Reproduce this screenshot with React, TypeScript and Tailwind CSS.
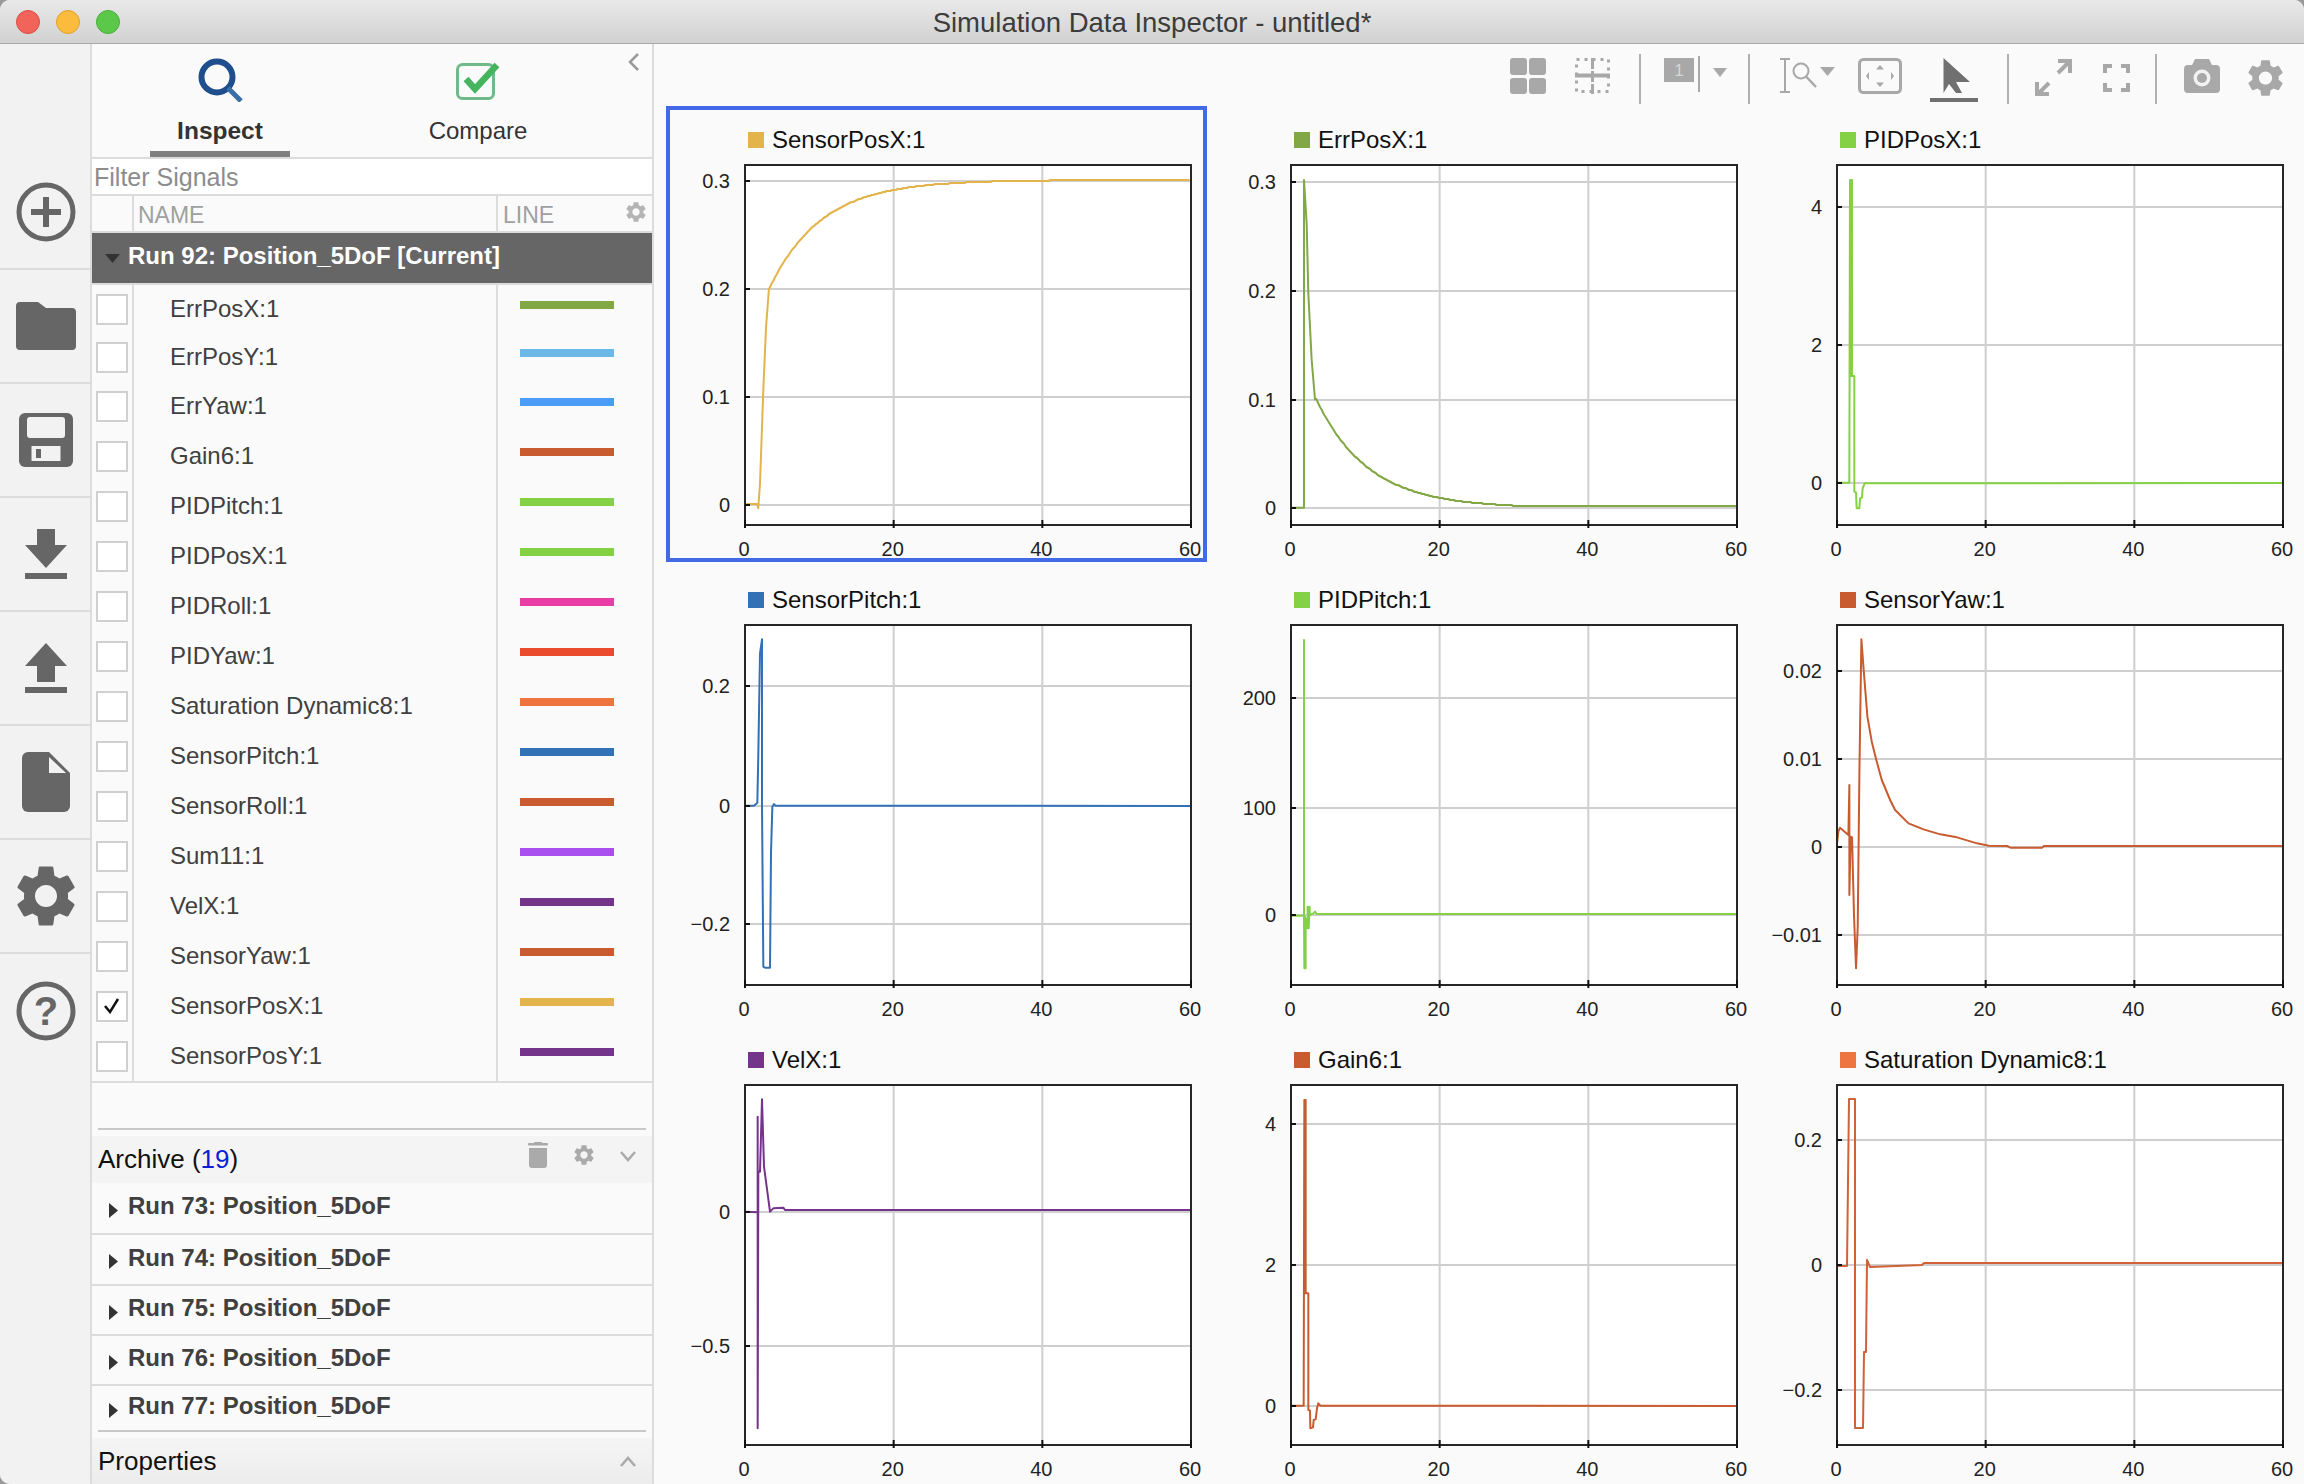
import React from 'react';

type Pt = [number, number];

// points below were read off the screenshot crops, so map crop coords to plot px
const toPlot = (pts: Pt[], sx: number, sy: number, ox: number, oy: number): Pt[] =>
  pts.map(([x, y]) => [(x - ox) / sx, (y - oy) / sy]);

// first order settling tail, rounded to whole pixels to keep the stepped look
const tail = (from: number, yOf: (v: number) => number): Pt[] => {
  const pts: Pt[] = [];
  for (let t = from; t <= 60; t += 0.25) {
    pts.push([(t / 60) * 446, Math.round(yOf(0.1 * Math.exp(-(t - from) / 7)))]);
  }
  return pts;
};

const plots: { name: string; color: string; line?: string; yTicks: [string, number][]; points: Pt[] }[] = [
  {
    name: 'SensorPosX:1',
    color: '#e3b44c',
    yTicks: [['0.3', 16], ['0.2', 124], ['0.1', 232], ['0', 340]],
    points: [
      ...toPlot(
        [[238, 1212], [272, 1212], [275, 1225], [280, 1150], [290, 850], [297, 680], [305, 567]],
        2.8, 3, 238, 195,
      ),
      ...tail(3.3, (v) => 15 + v * 1080),
    ],
  },
  {
    name: 'ErrPosX:1',
    color: '#82a846',
    yTicks: [['0.3', 17], ['0.2', 126], ['0.1', 235], ['0', 343]],
    points: [
      ...toPlot(
        [[18, 1043], [57, 1043], [57, 60], [65, 190], [70, 400], [80, 600], [90, 718]],
        3, 3, 18, 15,
      ),
      ...tail(3.4, (v) => Math.min(341, 343 - v * 1087)),
    ],
  },
  {
    name: 'PIDPosX:1',
    color: '#84d146',
    yTicks: [['4', 42], ['2', 180], ['0', 318]],
    points: [
      ...toPlot(
        [[21, 968], [58, 968], [60, 60], [62, 648], [63, 60], [66, 60], [66, 648], [73, 648], [73, 995], [78, 997], [80, 1045], [88, 1045], [90, 1015], [96, 1012], [98, 985], [104, 970]],
        3, 3, 21, 15,
      ),
      [446, 318],
    ],
  },
  {
    name: 'SensorPitch:1',
    color: '#3371b7',
    yTicks: [['0.2', 61], ['0', 181], ['−0.2', 299]],
    points: [
      ...toPlot(
        [[15, 557], [42, 557], [52, 548], [55, 400], [60, 100], [66, 58], [66, 555], [70, 1040], [75, 1043], [90, 1043], [93, 700], [97, 560], [102, 552], [106, 557]],
        3, 3, 15, 15,
      ),
      [446, 181],
    ],
  },
  {
    name: 'PIDPitch:1',
    color: '#84d146',
    yTicks: [['200', 73], ['100', 183], ['0', 290]],
    points: [
      ...toPlot(
        [[18, 887], [57, 887], [57, 60], [57, 890], [58, 1045], [60, 890], [61, 1045], [62, 1045], [62, 895], [68, 925], [68, 860], [71, 925], [74, 860], [74, 885], [85, 880], [90, 875], [95, 882]],
        3, 3, 18, 15,
      ),
      [446, 289],
    ],
  },
  {
    name: 'SensorYaw:1',
    color: '#c85c30',
    yTicks: [['0.02', 46], ['0.01', 134], ['0', 222], ['−0.01', 310]],
    points: toPlot(
      [[171, 730], [175, 695], [180, 683], [205, 705], [208, 555], [208, 885], [212, 710], [216, 712], [222, 950], [228, 1105], [233, 980], [238, 520], [244, 118], [250, 200], [262, 350], [275, 425], [290, 485], [305, 540], [330, 600], [345, 630], [385, 670], [430, 688], [480, 703], [530, 712], [590, 730], [625, 737], [680, 738], [690, 743], [785, 743], [790, 738], [1505, 738]],
      2.992, 3, 171, 75,
    ),
  },
  {
    name: 'VelX:1',
    color: '#74348a',
    yTicks: [['0', 127], ['−0.5', 261]],
    points: [
      ...toPlot(
        [[15, 395], [53, 397], [53, 110], [53, 1045], [55, 275], [60, 275], [66, 58], [72, 260], [90, 395], [100, 385], [130, 383], [135, 390]],
        3, 3, 15, 15,
      ),
      [446, 125],
    ],
  },
  {
    name: 'Gain6:1',
    color: '#c85c30',
    yTicks: [['4', 39], ['2', 180], ['0', 321]],
    points: [
      ...toPlot(
        [[18, 977], [56, 977], [58, 60], [60, 640], [61, 60], [62, 60], [62, 640], [70, 640], [70, 990], [75, 992], [76, 1045], [84, 1042], [86, 1020], [92, 1018], [96, 985], [100, 970], [106, 977]],
        3, 3, 18, 15,
      ),
      [446, 321],
    ],
  },
  {
    name: 'Saturation Dynamic8:1',
    color: '#ee7440',
    line: '#cf6236',
    yTicks: [['0.2', 55], ['0', 180], ['−0.2', 305]],
    points: [[0, 181], [10, 181], [12, 14], [18, 14], [18, 343], [26, 343], [27, 267], [29, 267], [30, 175], [33, 182], [85, 180], [87, 178], [446, 178]],
  },
];

const signals = [
  { name: 'ErrPosX:1', color: 'bg-[#82a846]', height: 'h-[48px]' },
  { name: 'ErrPosY:1', color: 'bg-[#6cb8e8]', height: 'h-[48px]' },
  { name: 'ErrYaw:1', color: 'bg-[#4a9cf5]', height: 'h-[50px]' },
  { name: 'Gain6:1', color: 'bg-[#c85c30]', height: 'h-[50px]' },
  { name: 'PIDPitch:1', color: 'bg-[#84d146]', height: 'h-[50px]' },
  { name: 'PIDPosX:1', color: 'bg-[#84d146]', height: 'h-[50px]' },
  { name: 'PIDRoll:1', color: 'bg-[#e93ca5]', height: 'h-[50px]' },
  { name: 'PIDYaw:1', color: 'bg-[#e94b2c]', height: 'h-[50px]' },
  { name: 'Saturation Dynamic8:1', color: 'bg-[#ee7440]', height: 'h-[50px]' },
  { name: 'SensorPitch:1', color: 'bg-[#3371b7]', height: 'h-[50px]' },
  { name: 'SensorRoll:1', color: 'bg-[#c85c30]', height: 'h-[50px]' },
  { name: 'Sum11:1', color: 'bg-[#a94ff0]', height: 'h-[50px]' },
  { name: 'VelX:1', color: 'bg-[#74348a]', height: 'h-[50px]' },
  { name: 'SensorYaw:1', color: 'bg-[#c85c30]', height: 'h-[50px]' },
  { name: 'SensorPosX:1', color: 'bg-[#e3b44c]', height: 'h-[50px]', checked: true },
  { name: 'SensorPosY:1', color: 'bg-[#74348a]', height: 'h-[50px]' },
];

const archiveRuns = [
  { name: 'Run 73: Position_5DoF', height: 'h-[52px]' },
  { name: 'Run 74: Position_5DoF', height: 'h-[51px]' },
  { name: 'Run 75: Position_5DoF', height: 'h-[50px]' },
  { name: 'Run 76: Position_5DoF', height: 'h-[50px]' },
  { name: 'Run 77: Position_5DoF', height: 'h-[44px]', last: true },
];

const GEAR =
  'M19.14 12.94c.04-.3.06-.61.06-.94 0-.32-.02-.64-.07-.94l2.03-1.58c.18-.14.23-.41.12-.61l-1.92-3.32c-.12-.22-.37-.29-.59-.22l-2.39.96c-.5-.38-1.03-.7-1.62-.94l-.36-2.54c-.04-.24-.24-.41-.48-.41h-3.84c-.24 0-.43.17-.47.41l-.36 2.54c-.59.24-1.13.57-1.62.94l-2.39-.96c-.22-.08-.47 0-.59.22L2.74 8.87c-.12.21-.08.47.12.61l2.03 1.58c-.05.3-.09.63-.09.94s.02.64.07.94l-2.03 1.58c-.18.14-.23.41-.12.61l1.92 3.32c.12.22.37.29.59.22l2.39-.96c.5.38 1.03.7 1.62.94l.36 2.54c.05.24.24.41.48.41h3.84c.24 0 .44-.17.47-.41l.36-2.54c.59-.24 1.13-.56 1.62-.94l2.39.96c.22.08.47 0 .59-.22l1.92-3.32c.12-.22.07-.47-.12-.61l-2.01-1.58zM12 15.6c-1.98 0-3.6-1.62-3.6-3.6s1.62-3.6 3.6-3.6 3.6 1.62 3.6 3.6-1.62 3.6-3.6 3.6z';

const Gear = ({ className }: { className: string }) => (
  <svg viewBox="2.6 2.2 18.8 19.6" className={className} fill="currentColor">
    <path d={GEAR} fillRule="evenodd" />
  </svg>
);

const railIcons = [
  <svg key="add" width="60" height="60" viewBox="0 0 60 60" fill="none" stroke="#666">
    <circle cx="30" cy="30" r="27" strokeWidth="5" />
    <path d="M30 15V45M15 30H45" strokeWidth="6" />
  </svg>,
  <svg key="open" width="60" height="48" viewBox="0 0 60 48" fill="#666">
    <path d="M4 0H22L30 6H56a4 4 0 0 1 4 4V44a4 4 0 0 1-4 4H4a4 4 0 0 1-4-4V4a4 4 0 0 1 4-4z" />
  </svg>,
  <svg key="save" width="54" height="54" viewBox="0 0 54 54">
    <rect width="54" height="54" rx="6" fill="#666" />
    <rect x="8" y="4" width="38" height="21" rx="3" fill="#f2f2f2" />
    <rect x="12.5" y="33" width="29" height="15" fill="#f2f2f2" />
    <rect x="17" y="36" width="5" height="9" fill="#666" />
  </svg>,
  <svg key="down" width="42" height="50" viewBox="0 0 42 50" fill="#666">
    <path d="M12 0H30V16H42L21 39L0 16H12z" />
    <rect y="44" width="42" height="6" />
  </svg>,
  <svg key="up" width="42" height="50" viewBox="0 0 42 50" fill="#666">
    <path d="M21 0L42 23H30V39H12V23H0z" />
    <rect y="44" width="42" height="6" />
  </svg>,
  <svg key="file" width="48" height="60" viewBox="0 0 48 60">
    <path d="M6 0H27L48 21V54a6 6 0 0 1-6 6H6a6 6 0 0 1-6-6V6a6 6 0 0 1 6-6z" fill="#666" />
    <path d="M27 5V21H44z" fill="#f2f2f2" />
  </svg>,
  <Gear key="gear" className="w-[60px] h-[60px] text-[#666]" />,
  <svg key="help" width="60" height="60" viewBox="0 0 60 60">
    <circle cx="30" cy="30" r="27" fill="none" stroke="#666" strokeWidth="5" />
    <text x="30" y="44" textAnchor="middle" fontSize="40" fontWeight="700" fill="#666">?</text>
  </svg>,
];

const Chart = ({ plot }: { plot: (typeof plots)[number] }) => {
  const xTicks = [0, 20, 40, 60];
  const xOf = (t: number) => (t / 60) * 446;
  return (
    <svg width="446" height="360" viewBox="0 0 446 360" className="block overflow-visible ml-[75px]">
      <rect width="446" height="360" fill="#fff" />
      {xTicks.slice(1, 3).map((t) => (
        <line key={t} x1={xOf(t)} x2={xOf(t)} y1="0" y2="360" stroke="#cfcfcf" strokeWidth="2" />
      ))}
      {plot.yTicks.map(([label, y]) => (
        <line key={label} x1="0" x2="446" y1={y} y2={y} stroke="#cfcfcf" strokeWidth="2" />
      ))}
      <polyline
        points={plot.points.map(([x, y]) => `${x},${y}`).join(' ')}
        fill="none"
        stroke={plot.line ?? plot.color}
        strokeWidth="2"
        strokeLinejoin="round"
      />
      <rect width="446" height="360" fill="none" stroke="#262626" strokeWidth="2" />
      {plot.yTicks.map(([label, y]) => (
        <g key={label}>
          <line x1="0" x2="5" y1={y} y2={y} stroke="#111" strokeWidth="2" />
          <text x="-15" y={y + 7} textAnchor="end" fontSize="20" fill="#222">{label}</text>
        </g>
      ))}
      {xTicks.map((t) => (
        <g key={t}>
          <line x1={xOf(t)} x2={xOf(t)} y1="355" y2="363" stroke="#111" strokeWidth="2" />
          <text x={xOf(t) - 1} y="391" textAnchor="middle" fontSize="20" fill="#222">{t}</text>
        </g>
      ))}
    </svg>
  );
};

const PlotCell = ({ plot, selected }: { plot: (typeof plots)[number]; selected?: boolean }) => (
  <div className={`w-[541px] h-[456px] border-4 ${selected ? 'border-[#4169e8]' : 'border-transparent'}`}>
    <div className="flex items-center h-[16px] mt-[22px] mb-[17px] ml-[78px] gap-2">
      <span className="w-4 h-4" style={{ backgroundColor: plot.color }} />
      <span className="text-[24px] text-[#111] leading-none">{plot.name}</span>
    </div>
    <Chart plot={plot} />
  </div>
);

const Sep = ({ className }: { className: string }) => <div className={`w-[2px] h-[50px] bg-[#b0b0b0] ${className}`} />;

const Toolbar = () => (
  <div className="flex justify-end items-start h-[62px] pt-[10px] pr-5 text-[#a8a8a8]">
    <svg width="36" height="50" viewBox="0 0 36 50" fill="#a8a8a8">
      <rect y="4" width="17" height="17" rx="3" />
      <rect x="19" y="4" width="17" height="17" rx="3" />
      <rect y="24" width="17" height="16" rx="3" />
      <rect x="19" y="24" width="17" height="16" rx="3" />
    </svg>
    <svg width="35" height="50" viewBox="0 0 35 50" fill="none" stroke="#a8a8a8" className="ml-[29px]">
      <rect x="1.5" y="5.5" width="32" height="32" strokeWidth="3" strokeDasharray="3 5" />
      <path d="M0 21.5H35" strokeWidth="4" />
      <path d="M17.5 4V40" strokeWidth="3" strokeDasharray="11 2" />
    </svg>
    <Sep className="ml-[29px]" />
    <svg width="63" height="50" viewBox="0 0 63 50" className="ml-[23px]">
      <rect y="4" width="30" height="24" fill="#a8a8a8" />
      <text x="15" y="22" textAnchor="middle" fontSize="17" fill="#d6d6d6">1</text>
      <path d="M35 2V38" stroke="#a8a8a8" strokeWidth="2" />
      <path d="M49 14H63L56 23z" fill="#a8a8a8" />
    </svg>
    <Sep className="ml-[21px]" />
    <svg width="55" height="50" viewBox="0 0 55 50" fill="none" stroke="#a8a8a8" className="ml-[30px]">
      <path d="M0 5H10M5 5V38M0 38H10" strokeWidth="2" />
      <circle cx="21" cy="17" r="7.5" strokeWidth="2" />
      <path d="M26.5 23L36 33" strokeWidth="2.5" />
      <path d="M40 13H55L47.5 22z" fill="#a8a8a8" stroke="none" />
    </svg>
    <svg width="44" height="50" viewBox="0 0 44 50" className="ml-[23px]">
      <rect x="1.5" y="5.5" width="41" height="33" rx="4" fill="none" stroke="#a8a8a8" strokeWidth="3" />
      <path d="M22 11L18 15.5H26zM22 33L18 28.5H26zM8 22L11 18V26zM36 22L33 18V26z" fill="#a8a8a8" />
    </svg>
    <svg width="48" height="48" viewBox="0 0 48 48" className="ml-[28px]">
      <path d="M13.5 4L40 28H26L32 39H26L19 30L13.5 39z" fill="#707070" />
      <rect y="44" width="48" height="4" fill="#707070" />
    </svg>
    <Sep className="ml-[29px]" />
    <svg width="37" height="50" viewBox="0 0 37 50" fill="none" stroke="#a8a8a8" strokeWidth="4" className="ml-[26px]">
      <path d="M3 40L14 29M2 28V40H14" />
      <path d="M23 19L35 7M23 7H35V19" />
    </svg>
    <svg width="27" height="50" viewBox="0 0 27 50" fill="none" stroke="#a8a8a8" strokeWidth="4" className="ml-[31px]">
      <path d="M2 19V12H9M18 12H25V19M25 29V36H18M9 36H2V29" />
    </svg>
    <Sep className="ml-[25px]" />
    <svg width="36" height="50" viewBox="0 0 36 50" className="ml-[27px]">
      <path d="M4 11H8L11 5H25L28 11H32a4 4 0 0 1 4 4V35a4 4 0 0 1-4 4H4a4 4 0 0 1-4-4V15a4 4 0 0 1 4-4z" fill="#a8a8a8" />
      <circle cx="18" cy="24" r="8.5" fill="#f2f2f2" />
      <circle cx="18" cy="24" r="5" fill="#a8a8a8" />
    </svg>
    <div className="ml-[27px] pt-[6px]">
      <Gear className="w-[37px] h-[36px] text-[#a8a8a8]" />
    </div>
  </div>
);

const Sidebar = () => (
  <div className="relative w-[562px] shrink-0 flex flex-col border-r-2 border-[#dcdcdc] bg-[#fafafa]">
    <svg width="13" height="18" viewBox="0 0 13 18" fill="none" stroke="#9a9a9a" strokeWidth="2.5" className="absolute right-[12px] top-[9px]">
      <path d="M11 1L3 9L11 17" />
    </svg>
    <div className="flex h-[115px] shrink-0 border-b-2 border-[#dcdcdc]">
      <div className="w-[140px] ml-[58px] h-[113px] flex flex-col items-center border-b-[6px] border-[#808080]">
        <svg width="45" height="44" viewBox="0 0 45 44" fill="none" className="mt-[14px]">
          <circle cx="19" cy="19" r="15.5" stroke="#1f4e8c" strokeWidth="6" />
          <path d="M30 30L43 43" stroke="#3a6ea5" strokeWidth="5" />
        </svg>
        <span className="mt-[17px] text-[24.5px] leading-none font-bold text-[#333]">Inspect</span>
      </div>
      <div className="w-[140px] ml-[118px] flex flex-col items-center">
        <svg width="45" height="40" viewBox="0 0 45 40" fill="none" className="mt-[17px]">
          <rect x="1.5" y="3.5" width="36" height="34" rx="5" stroke="#6fb98a" strokeWidth="3" />
          <path d="M10 18L19 28L41 4" stroke="#46b35f" strokeWidth="6.5" />
        </svg>
        <span className="mt-[18px] text-[24px] leading-none text-[#333]">Compare</span>
      </div>
    </div>
    <div className="h-[37px] shrink-0 bg-white flex items-center pl-[2px] pt-[3px] text-[25px] text-[#8c8c8c] border-b-2 border-[#dcdcdc]">Filter Signals</div>
    <div className="flex h-[37px] shrink-0 border-b-2 border-[#dcdcdc] text-[23px] text-[#a0a0a0] leading-none">
      <div className="w-[42px] border-r-2 border-[#dcdcdc]" />
      <div className="w-[364px] border-r-2 border-[#dcdcdc] pl-[4px] pt-[8px]">NAME</div>
      <div className="flex-1 flex justify-between pl-[5px] pr-[6px] pt-[8px]">
        LINE
        <Gear className="w-[20px] h-[20px] -mt-[2px] text-[#b4b4b4]" />
      </div>
    </div>
    <div className="flex items-center h-[50px] shrink-0 bg-[#666] text-[24px] font-bold text-white pb-[5px]">
      <svg width="15" height="9" viewBox="0 0 15 9" className="ml-[13px] mr-[8px] mt-[6px]">
        <path d="M0 0H15L7.5 9z" fill="#333" />
      </svg>
      Run 92: Position_5DoF [Current]
    </div>
    <div className="border-y-2 border-[#dcdcdc] shrink-0">
      {signals.map((s) => (
        <div key={s.name} className={`flex ${s.height}`}>
          <div className="w-[42px] border-r-2 border-[#dcdcdc] flex items-center pl-[4px]">
            <div className="w-[32px] h-[31px] bg-white border-2 border-[#d0d0d0] flex items-center justify-center">
              {s.checked && (
                <svg width="18" height="16" viewBox="0 0 18 16" fill="none" stroke="#111" strokeWidth="2.5">
                  <path d="M2 8L7 14L15 1" />
                </svg>
              )}
            </div>
          </div>
          <div className="w-[364px] border-r-2 border-[#dcdcdc] flex items-center pl-[36px] text-[24px] text-[#404040]">{s.name}</div>
          <div className="flex-1 pl-[22px] flex items-center pb-[8px]">
            <div className={`w-[94px] h-[8px] ${s.color}`} />
          </div>
        </div>
      ))}
    </div>
    <div className="h-[47px] shrink-0 mx-[6px] border-b-2 border-[#c8c8c8]" />
    <div className="mt-[6px] flex items-center h-[47px] shrink-0 bg-[#f4f4f4] pl-[6px] pr-[16px] text-[26px] text-[#111]">
      <span>Archive (<span className="text-[#0a1fd6]">19</span>)</span>
      <svg width="20" height="26" viewBox="0 0 20 26" fill="#aaa" className="ml-auto -mt-[9px]">
        <rect y="1" width="20" height="2.5" rx="1" />
        <rect x="6" width="8" height="2" />
        <path d="M1 6H19V23a3 3 0 0 1-3 3H4a3 3 0 0 1-3-3z" />
      </svg>
      <Gear className="w-[20px] h-[20px] ml-[26px] -mt-[9px] text-[#aaa]" />
      <svg width="16" height="11" viewBox="0 0 16 11" fill="none" stroke="#aaa" strokeWidth="2.5" className="ml-[26px] -mt-[6px]">
        <path d="M1 1L8 9L15 1" />
      </svg>
    </div>
    {archiveRuns.map((r) => (
      <div key={r.name} className={`flex items-center shrink-0 ${r.height} text-[24px] font-bold text-[#404040] pb-[4px] ${r.last ? '' : 'border-b-2 border-[#dcdcdc]'}`}>
        <svg width="9" height="15" viewBox="0 0 9 15" className="ml-[17px] mr-[10px] mt-[8px]">
          <path d="M0 0L9 7.5L0 15z" fill="#333" />
        </svg>
        {r.name}
      </div>
    ))}
    <div className="mx-[6px] h-[2px] shrink-0 bg-[#c8c8c8]" />
    <div className="mt-[6px] flex-1 flex items-center justify-between bg-gradient-to-b from-[#f5f5f5] to-[#ececec] pl-[6px] pr-[16px] text-[26px] text-[#111]">
      Properties
      <svg width="16" height="11" viewBox="0 0 16 11" fill="none" stroke="#aaa" strokeWidth="2.5">
        <path d="M1 10L8 2L15 10" />
      </svg>
    </div>
  </div>
);

export default function App() {
  return (
    <div className="w-[2304px] h-[1484px] overflow-hidden bg-[#9a9a9a] [font-family:'Liberation_Sans',Arial,sans-serif]">
      <div className="h-full flex flex-col overflow-hidden rounded-t-[10px] rounded-bl-[10px] bg-[#fafafa]">
        <div className="relative h-[44px] shrink-0 flex items-center justify-center bg-gradient-to-b from-[#e9e9e9] to-[#d1d1d1] border-b border-[#a9a9a9] text-[27.5px] text-[#3c3c3c] pt-[2px]">
          <div className="absolute left-4 top-[10px] flex gap-4">
            <span className="w-6 h-6 rounded-full bg-[#f2635a] border border-[#dc4c43]" />
            <span className="w-6 h-6 rounded-full bg-[#fbbc3d] border border-[#e0a12e]" />
            <span className="w-6 h-6 rounded-full bg-[#5bc84a] border border-[#4aaf3c]" />
          </div>
          Simulation Data Inspector - untitled*
        </div>
        <div className="flex-1 flex min-h-0">
          <div className="w-[92px] shrink-0 bg-[#f2f2f2] border-r-2 border-[#dcdcdc] pt-[112px]">
            {railIcons.map((icon, i) => (
              <div key={i} className={`h-[114px] flex items-center justify-center pl-[2px] ${i < railIcons.length - 1 ? 'border-b-2 border-[#dcdcdc]' : ''}`}>
                {icon}
              </div>
            ))}
          </div>
          <Sidebar />
          <div className="flex-1 min-w-0">
            <Toolbar />
            <div className="grid grid-cols-[546px_546px_546px] auto-rows-[460px] pl-[12px]">
              {plots.map((p, i) => (
                <PlotCell key={p.name} plot={p} selected={i === 0} />
              ))}
            </div>
          </div>
        </div>
      </div>
    </div>
  );
}
